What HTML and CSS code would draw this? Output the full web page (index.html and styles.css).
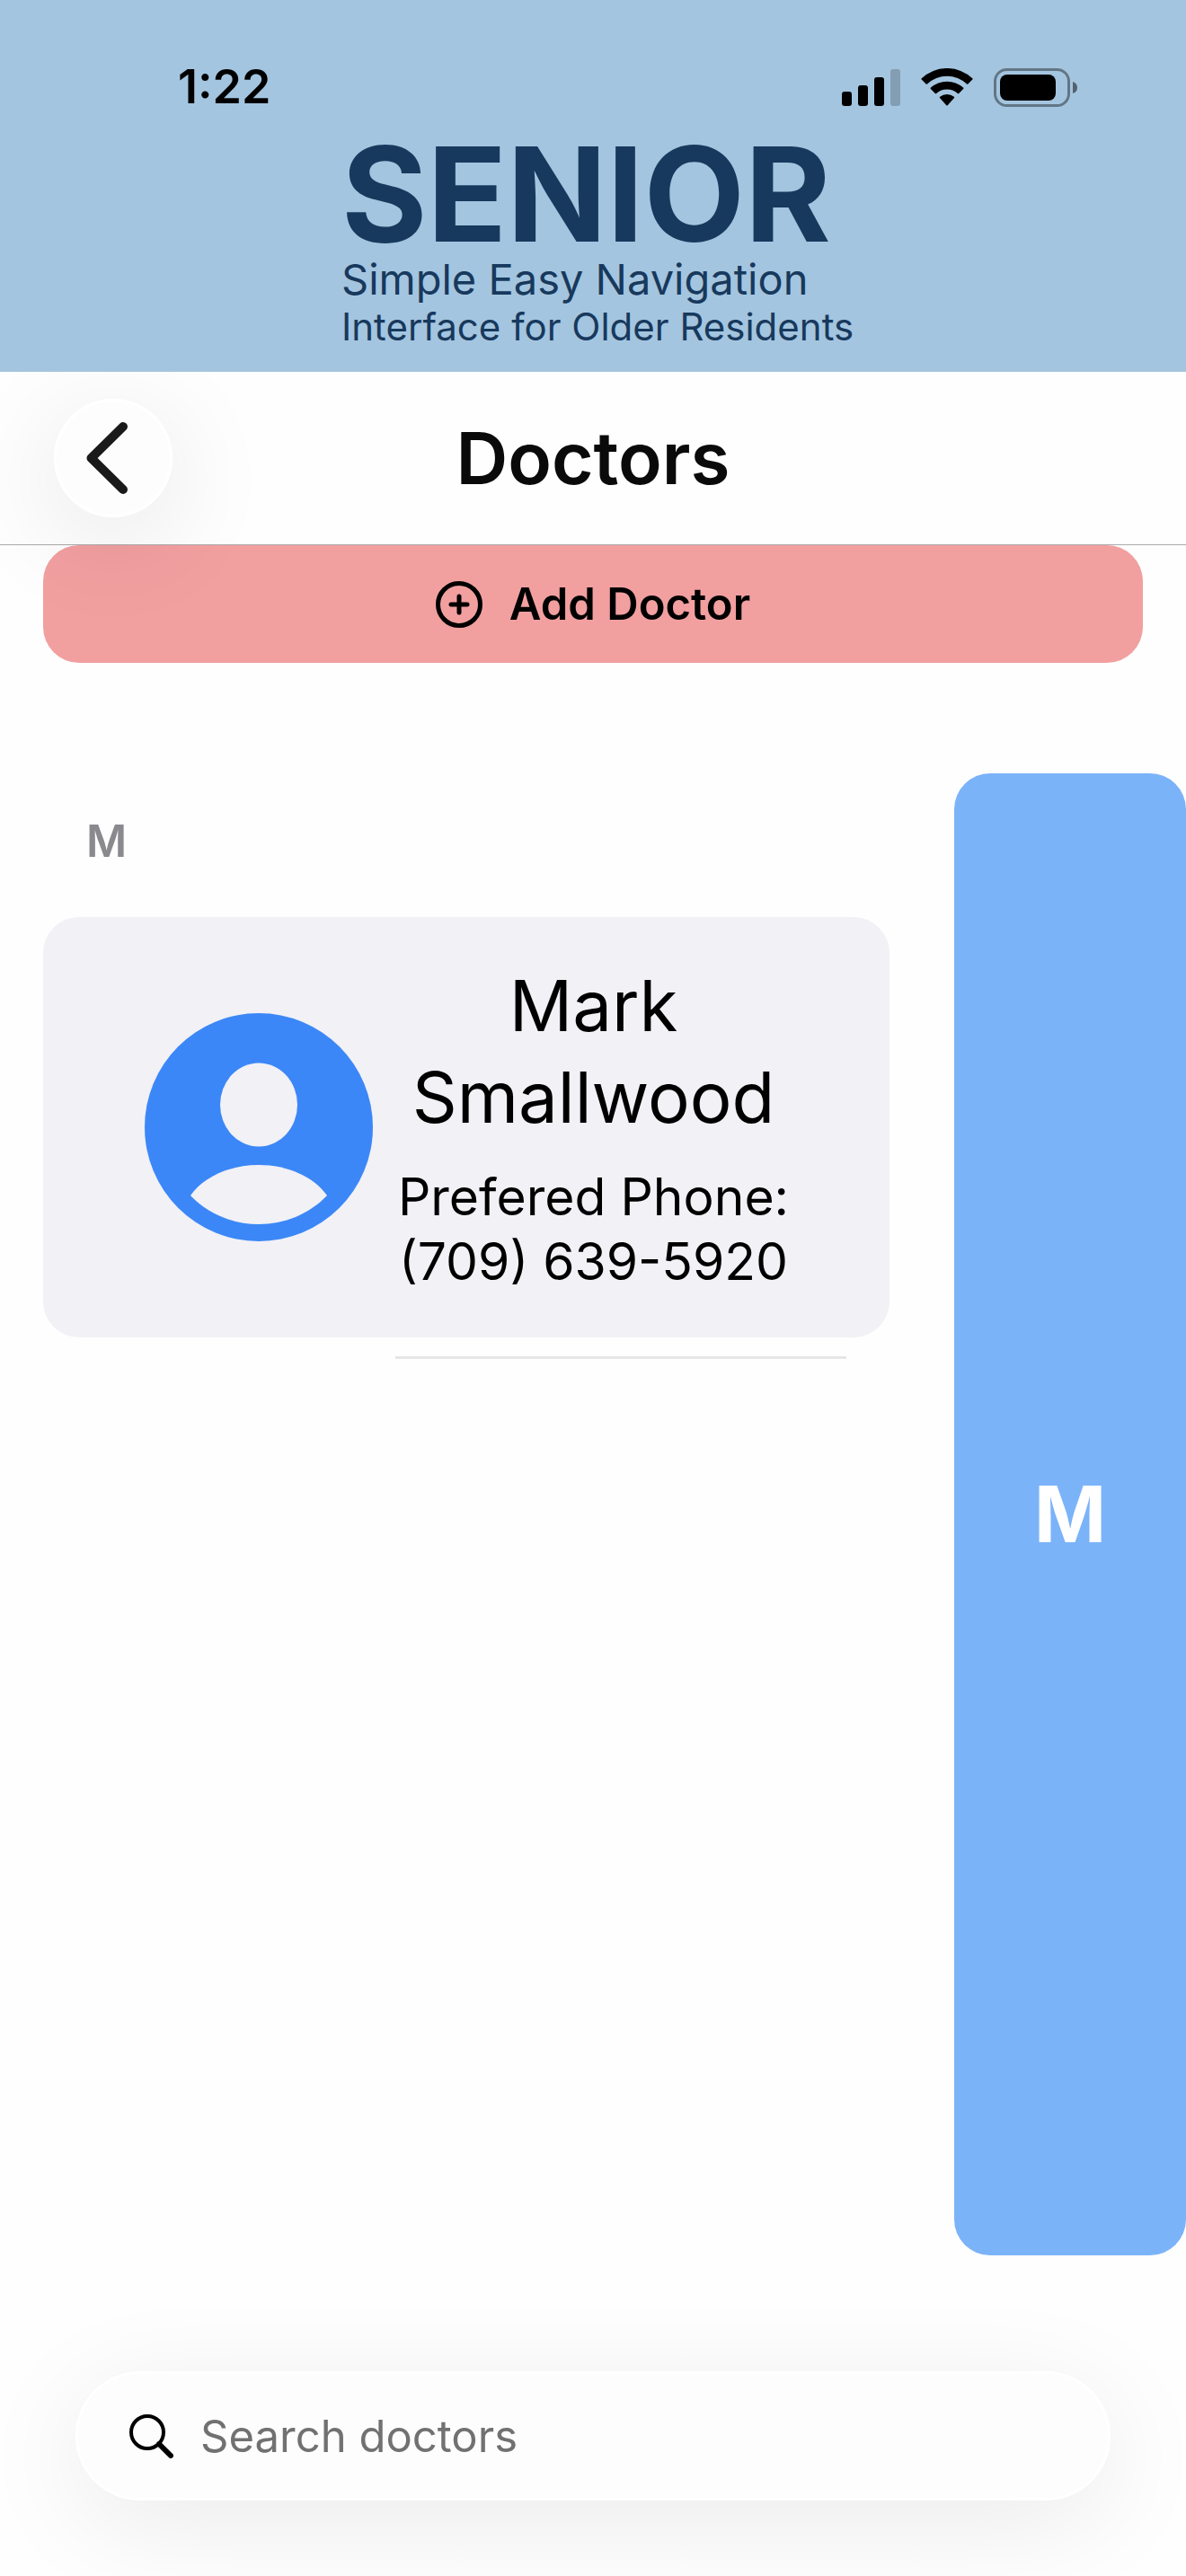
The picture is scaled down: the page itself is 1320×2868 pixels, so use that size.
FILE: index.html
```
<!DOCTYPE html>
<html lang="en">
<head>
    <meta charset="UTF-8">
    <meta name="viewport" content="width=device-width, initial-scale=1.0">
    <title>Doctors</title>
    <link rel="stylesheet" href="styles.css">
</head>
<body>
    <header class="banner">
        <div class="status-bar">
            <span class="time">1:22</span>
            <div class="status-icons">
                <svg width="65" height="41" viewBox="0 0 65 41">
                    <rect x="0" y="25" width="11" height="16" rx="3"/>
                    <rect x="18" y="18" width="11" height="23" rx="3"/>
                    <rect x="36" y="9" width="11" height="32" rx="3"/>
                    <rect x="54" y="0" width="11" height="41" rx="3" opacity="0.2"/>
                </svg>
                <svg width="58" height="42" viewBox="0 0 58 42">
                    <path d="M0.7 12.6Q0 12 0.7 11.3A41 41 0 0 1 57.3 11.3Q58 12 57.3 12.6L52.4 17.6Q51.7 18.1 51 17.5A32 32 0 0 0 7 17.5Q6.3 18.1 5.6 17.6Z"/>
                    <path d="M10.8 22.9Q10.2 22.2 10.9 21.6A27 27 0 0 1 47.1 21.6Q47.8 22.2 47.2 22.9L42.2 27.9Q41.5 28.5 40.8 27.9A18 18 0 0 0 17.2 27.9Q16.5 28.5 15.8 27.9Z"/>
                    <path d="M21 33.1Q20.3 32.4 21.1 31.8A13 13 0 0 1 36.9 31.8Q37.7 32.4 37 33.1L29.7 41.2Q29 42 28.3 41.2Z"/>
                </svg>
                <svg width="94" height="43" viewBox="0 0 94 43">
                    <rect x="1.5" y="1.5" width="82" height="40" rx="13" fill="none" stroke="#000" stroke-width="3" opacity="0.4"/>
                    <rect x="7" y="7" width="62" height="29" rx="8"/>
                    <path d="M88 15Q93 16.500 93 21.500Q93 26.500 88 28Z" opacity="0.5"/>
                </svg>
            </div>
        </div>
        <div class="logo">
            <span class="logo-name">SENIOR</span>
            <span class="logo-line">Simple Easy Navigation</span>
            <span class="logo-line small">Interface for Older Residents</span>
        </div>
    </header>

    <nav class="title-bar">
        <button class="back-button" aria-label="Back">
            <svg width="46" height="80" viewBox="0 0 46 80" fill="none" stroke="#1a1a1a" stroke-width="10" stroke-linecap="round" stroke-linejoin="round">
                <path d="M41 5L5.500 40L41 75"/>
            </svg>
        </button>
        <h1>Doctors</h1>
    </nav>

    <div class="actions">
        <button class="add-button">
            <svg width="52" height="52" viewBox="0 0 52 52" fill="none" stroke="#000" stroke-width="5" stroke-linecap="round">
                <circle cx="26" cy="26" r="23.500"/>
                <path d="M26 17V35M17 26H35"/>
            </svg>
            Add Doctor
        </button>
    </div>

    <main class="content">
        <section class="doctor-list">
            <h2>M</h2>
            <a href="#" class="doctor-card">
                <svg class="avatar" width="254" height="254" viewBox="0 0 254 254">
                    <circle cx="127" cy="127" r="127" fill="#3c87f7"/>
                    <ellipse cx="127" cy="102" rx="43" ry="46.500" fill="#f1f1f6"/>
                    <path d="M51 203C66 182 95 169 127 169S188 182 203 203C183 224 155 235 127 235S71 224 51 203Z" fill="#f1f1f6"/>
                </svg>
                <div class="doctor-info">
                    <span class="doctor-name">Mark Smallwood</span>
                    <span class="doctor-phone">Prefered Phone: (709) 639-5920</span>
                </div>
            </a>
            <hr>
        </section>
        <nav class="letter-index">
            <a href="#">M</a>
        </nav>
    </main>

    <footer class="search-area">
        <label class="search-box">
            <svg width="49" height="49" viewBox="0 0 49 49" fill="none" stroke="#000" stroke-linecap="round">
                <circle cx="20" cy="20" r="18" stroke-width="4"/>
                <path d="M33 33L46 46" stroke-width="6"/>
            </svg>
            <input type="search" placeholder="Search doctors" aria-label="Search doctors">
        </label>
    </footer>
</body>
</html>
```

FILE: styles.css
```
* {
    box-sizing: border-box;
}

body {
    margin: 0;
    min-height: 100vh;
    display: flex;
    flex-direction: column;
    font-family: Inter, "Liberation Sans", sans-serif;
    color: #000;
    background-color: #fefefe;
}

button {
    border: none;
    padding: 0;
    font-family: inherit;
    color: inherit;
    cursor: pointer;
}

a {
    color: inherit;
    text-decoration: none;
}

svg {
    display: block;
    flex-shrink: 0;
}

/* Banner, stays above the shadow of the back button */
.banner {
    position: relative;
    z-index: 2;
    padding-bottom: 24px;
    background-color: #a4c5df;
}

.status-bar {
    display: flex;
    justify-content: space-between;
    align-items: center;
    height: 148px;
    padding: 46px 120px 0 198px;
}

.time {
    font-size: 52px;
    line-height: 60px;
    font-weight: 600;
}

.status-icons {
    display: flex;
    align-items: center;
    gap: 23px;
}

.logo {
    display: flex;
    flex-direction: column;
    width: 560px;
    margin: 0 auto;
    color: #17395d;
}

.logo-name {
    font-size: 146px;
    line-height: 136px;
    font-weight: 700;
}

.logo-line {
    font-size: 47px;
    line-height: 54px;
    white-space: nowrap;
}

.logo-line.small {
    font-size: 42px;
    line-height: 52px;
}

/* Title bar */
.title-bar {
    position: relative;
    z-index: 1;
    display: grid;
    grid-template-columns: 132px 1fr 132px;
    align-items: center;
    height: 193px;
    padding: 0 60px;
    border-bottom: 1px solid #aaa;
}

.back-button {
    display: flex;
    justify-content: center;
    align-items: center;
    width: 132px;
    height: 132px;
    padding-right: 14px;
    border-radius: 50%;
    background-color: #fdfdfd;
    box-shadow: inset 0 0 0 3px #fff, 0 24px 120px rgba(0, 0, 0, 0.1);
}

h1 {
    margin: 0;
    text-align: center;
    font-size: 80px;
    line-height: 100px;
    font-weight: 600;
    color: #0a0a0a;
}

/* Add button */
.actions {
    padding: 0 48px;
}

.add-button {
    display: flex;
    justify-content: center;
    align-items: center;
    gap: 30px;
    width: 100%;
    height: 131px;
    border-radius: 40px;
    background-color: #f29fa0;
    font-size: 49px;
    font-weight: 600;
}

/* Doctor list */
.content {
    flex: 1;
    display: flex;
    gap: 72px;
    padding-top: 123px;
}

.doctor-list {
    flex: 1;
    padding: 46px 0 0 48px;
}

h2 {
    margin: 0 48px 54px;
    font-size: 49px;
    line-height: 60px;
    font-weight: 600;
    color: #8a8a8e;
}

.doctor-card {
    display: flex;
    align-items: center;
    padding: 48px 84px 48px 113px;
    border-radius: 40px;
    background-color: #f1f1f6;
}

.doctor-info {
    flex: 1;
    display: flex;
    flex-direction: column;
    gap: 24px;
    text-align: center;
}

.doctor-name {
    font-size: 78px;
    line-height: 102px;
}

.doctor-phone {
    font-size: 57px;
    line-height: 72px;
}

hr {
    height: 3px;
    margin: 21px 48px 0 392px;
    border: none;
    background-color: #e6e6e6;
}

.letter-index {
    display: flex;
    width: 258px;
    border-radius: 40px;
    background-color: #7bb3f9;
}

.letter-index a {
    flex: 1;
    display: flex;
    justify-content: center;
    align-items: center;
    font-size: 86px;
    font-weight: 700;
    color: #fff;
}

/* Search */
.search-area {
    padding: 129px 84px 84px;
}

.search-box {
    display: flex;
    align-items: center;
    gap: 30px;
    height: 144px;
    padding: 0 60px;
    border-radius: 72px;
    background-color: #fdfdfd;
    box-shadow: inset 0 0 0 3px #fff, 0 24px 120px rgba(0, 0, 0, 0.08);
}

.search-box input {
    flex: 1;
    padding: 0;
    border: none;
    outline: none;
    background: none;
    font-family: inherit;
    font-size: 49px;
}

.search-box input::placeholder {
    color: #717171;
}
```
